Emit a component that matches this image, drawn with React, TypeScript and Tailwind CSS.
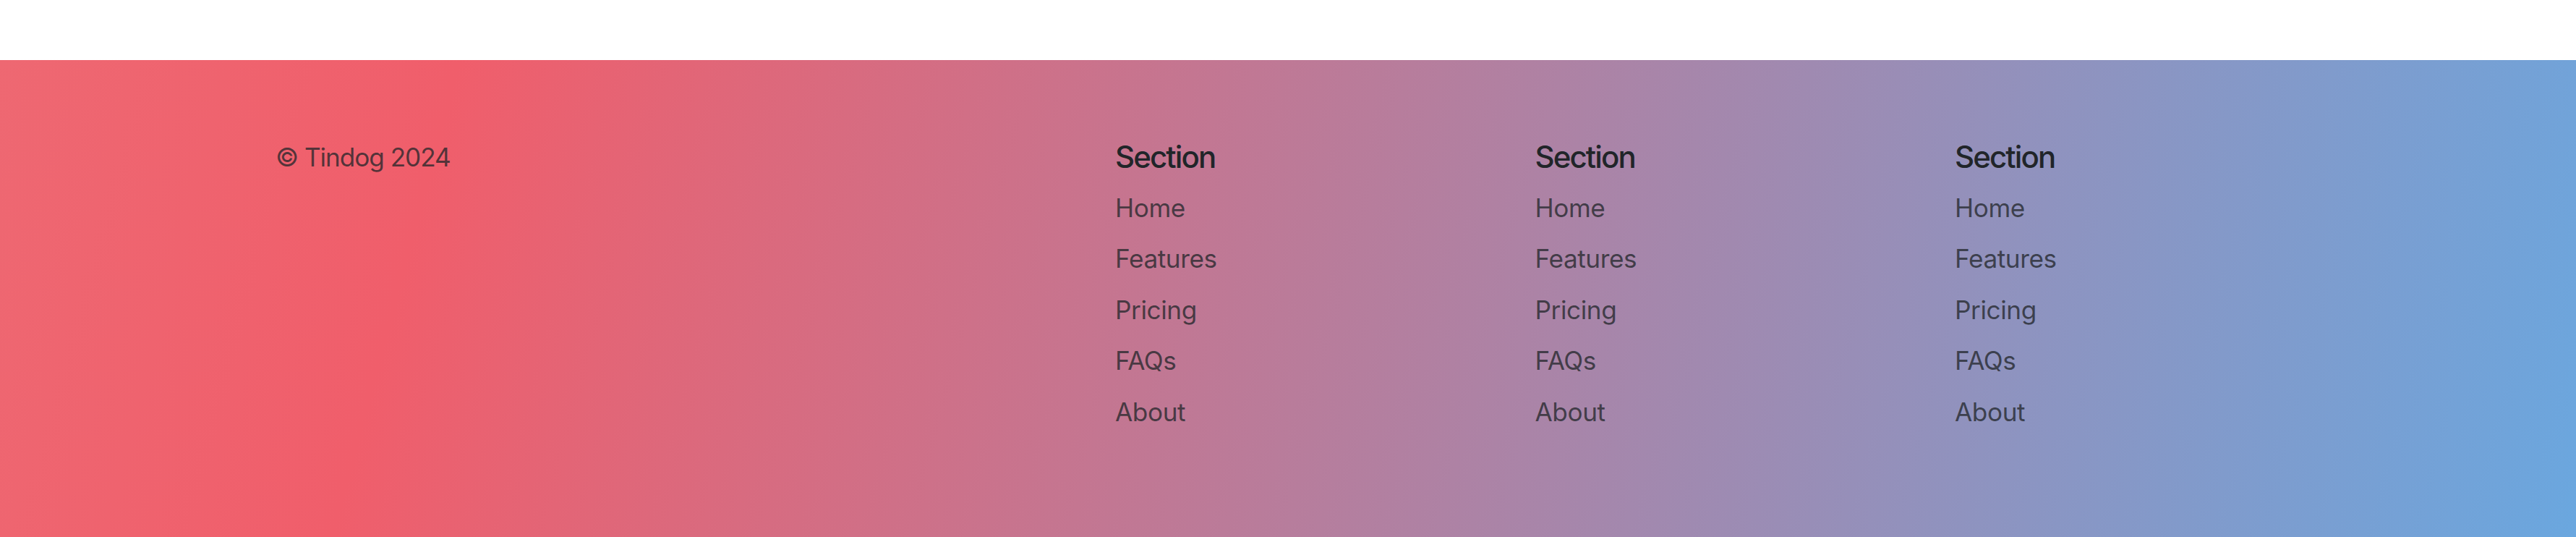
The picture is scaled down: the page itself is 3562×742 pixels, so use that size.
import React from 'react';

const LINKS = ['Home', 'Features', 'Pricing', 'FAQs', 'About'];

const FooterSection = () => (
  <div>
    <h5 className="text-[42px] leading-[1.25] font-medium tracking-[-0.045em] text-[#212529] mb-[17.6px]">Section</h5>
    <ul className="flex flex-col">
      {LINKS.map((link) => (
        <li key={link} className="mb-[17.6px]">
          <a href="#" className="text-[35.2px] leading-[1.5] tracking-[-0.012em] text-[rgba(33,37,41,0.75)]">
            {link}
          </a>
        </li>
      ))}
    </ul>
  </div>
);

export default function App() {
  return (
    <div className="w-full bg-white font-['Inter','Liberation_Sans',sans-serif]">
      <div className="h-[83px] bg-white"></div>
      <footer className="h-[659px] pt-[108px] bg-[linear-gradient(105deg,#ee6872_0%,#f05e6b_17%,#6aa7df_100%)]">
        <div className="grid grid-cols-[repeat(5,580.5px)] pl-[381px]">
          <div>
            <p className="text-[35.2px] leading-[1.5] tracking-[-0.03em] text-[rgba(33,37,41,0.75)]">© Tindog 2024</p>
          </div>
          <div></div>
          <FooterSection />
          <FooterSection />
          <FooterSection />
        </div>
      </footer>
    </div>
  );
}
